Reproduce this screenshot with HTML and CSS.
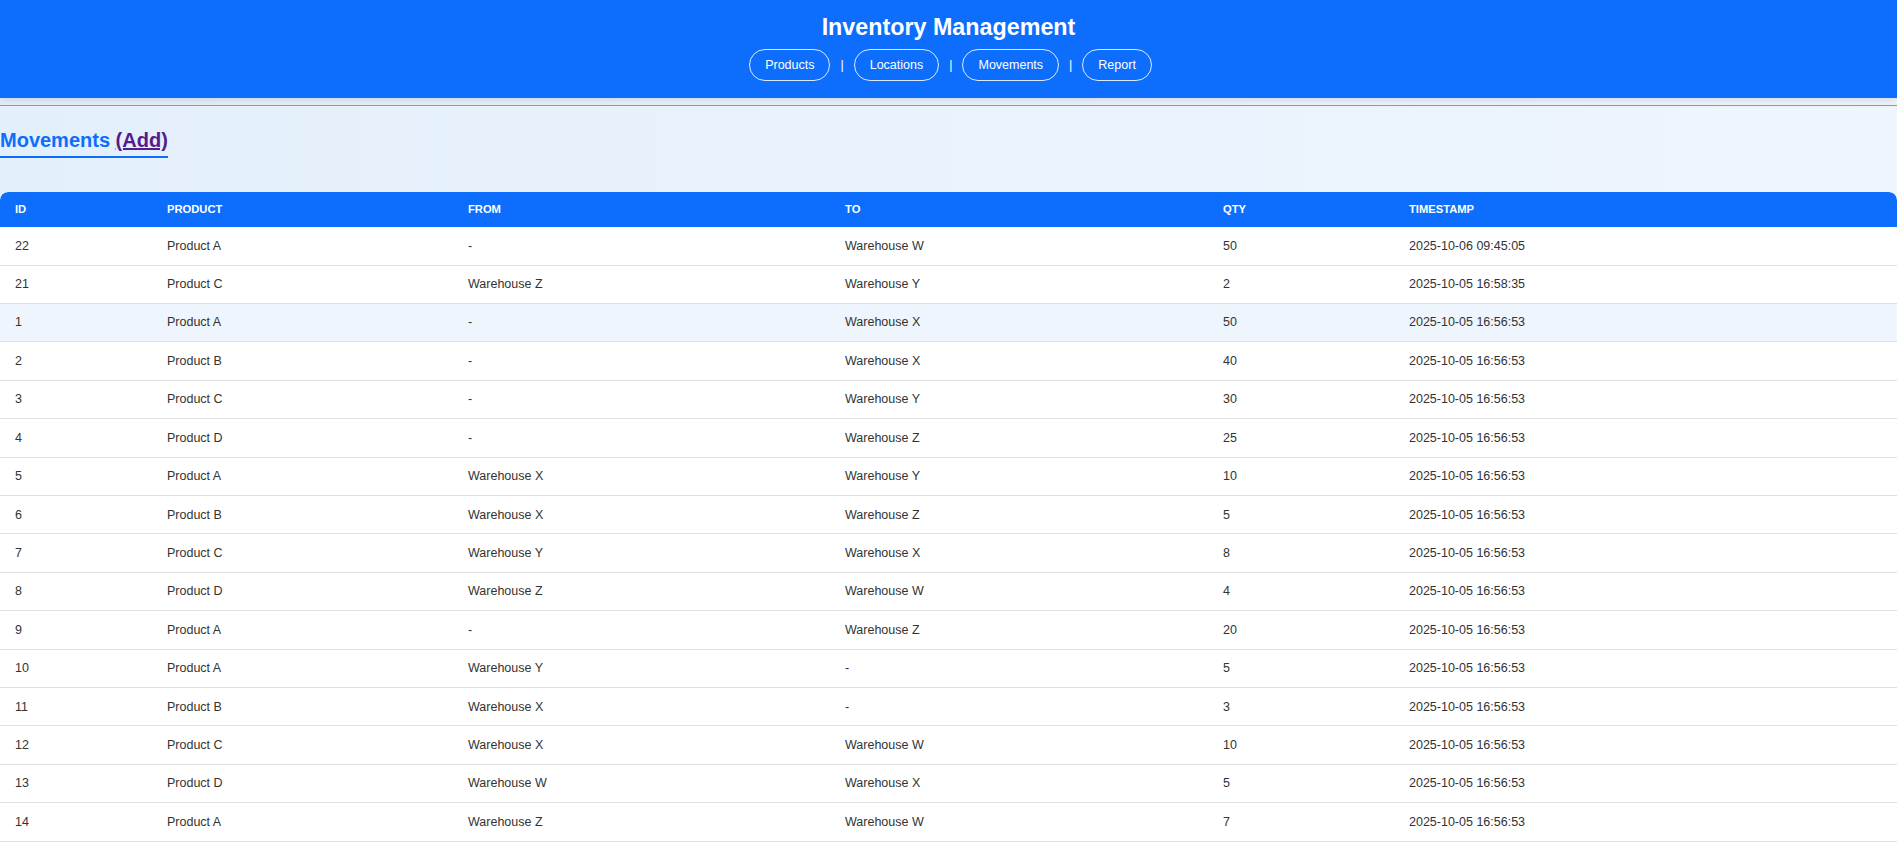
FILE: index.html
```html
<!DOCTYPE html>
<html lang="en">
<head>
<meta charset="utf-8">
<title>Inventory Management - Movements</title>
<link rel="stylesheet" href="styles.css">
</head>
<body>
<header class="site-header">
  <h1 class="site-title">Inventory Management</h1>
  <nav class="nav">
    <a class="nav-link" href="#">Products</a>
    <span class="nav-sep">|</span>
    <a class="nav-link" href="#">Locations</a>
    <span class="nav-sep">|</span>
    <a class="nav-link" href="#">Movements</a>
    <span class="nav-sep">|</span>
    <a class="nav-link" href="#">Report</a>
  </nav>
</header>
<hr class="divider">
<main class="content">
  <h2 class="page-title">Movements <a class="add-link" href="#">(Add)</a></h2>
  <table class="data-table">
    <colgroup>
      <col class="c-id"><col class="c-product"><col class="c-from"><col class="c-to"><col class="c-qty"><col class="c-ts">
    </colgroup>
    <thead>
      <tr><th>ID</th><th>Product</th><th>From</th><th>To</th><th>Qty</th><th>Timestamp</th></tr>
    </thead>
    <tbody>
      <tr><td>22</td><td>Product A</td><td>-</td><td>Warehouse W</td><td>50</td><td>2025-10-06 09:45:05</td></tr>
      <tr><td>21</td><td>Product C</td><td>Warehouse Z</td><td>Warehouse Y</td><td>2</td><td>2025-10-05 16:58:35</td></tr>
      <tr class="is-hover"><td>1</td><td>Product A</td><td>-</td><td>Warehouse X</td><td>50</td><td>2025-10-05 16:56:53</td></tr>
      <tr><td>2</td><td>Product B</td><td>-</td><td>Warehouse X</td><td>40</td><td>2025-10-05 16:56:53</td></tr>
      <tr><td>3</td><td>Product C</td><td>-</td><td>Warehouse Y</td><td>30</td><td>2025-10-05 16:56:53</td></tr>
      <tr><td>4</td><td>Product D</td><td>-</td><td>Warehouse Z</td><td>25</td><td>2025-10-05 16:56:53</td></tr>
      <tr><td>5</td><td>Product A</td><td>Warehouse X</td><td>Warehouse Y</td><td>10</td><td>2025-10-05 16:56:53</td></tr>
      <tr><td>6</td><td>Product B</td><td>Warehouse X</td><td>Warehouse Z</td><td>5</td><td>2025-10-05 16:56:53</td></tr>
      <tr><td>7</td><td>Product C</td><td>Warehouse Y</td><td>Warehouse X</td><td>8</td><td>2025-10-05 16:56:53</td></tr>
      <tr><td>8</td><td>Product D</td><td>Warehouse Z</td><td>Warehouse W</td><td>4</td><td>2025-10-05 16:56:53</td></tr>
      <tr><td>9</td><td>Product A</td><td>-</td><td>Warehouse Z</td><td>20</td><td>2025-10-05 16:56:53</td></tr>
      <tr><td>10</td><td>Product A</td><td>Warehouse Y</td><td>-</td><td>5</td><td>2025-10-05 16:56:53</td></tr>
      <tr><td>11</td><td>Product B</td><td>Warehouse X</td><td>-</td><td>3</td><td>2025-10-05 16:56:53</td></tr>
      <tr><td>12</td><td>Product C</td><td>Warehouse X</td><td>Warehouse W</td><td>10</td><td>2025-10-05 16:56:53</td></tr>
      <tr><td>13</td><td>Product D</td><td>Warehouse W</td><td>Warehouse X</td><td>5</td><td>2025-10-05 16:56:53</td></tr>
      <tr><td>14</td><td>Product A</td><td>Warehouse Z</td><td>Warehouse W</td><td>7</td><td>2025-10-05 16:56:53</td></tr>
      <tr><td>15</td><td>Product B</td><td>Warehouse W</td><td>Warehouse Y</td><td>6</td><td>2025-10-05 16:56:53</td></tr>
      <tr><td>16</td><td>Product C</td><td>Warehouse Y</td><td>Warehouse Z</td><td>4</td><td>2025-10-05 16:56:53</td></tr>
    </tbody>
  </table>
</main>
</body>
</html>
```

FILE: styles.css
```css
* { box-sizing: border-box; }

html, body {
  margin: 0;
  padding: 0;
}

body {
  font-family: "Liberation Sans", Arial, sans-serif;
  color: #333;
  background: linear-gradient(90deg, #e3effb 0%, #e9f3fd 50%, #eff5fd 100%);
  min-height: 100vh;
}

.site-header {
  position: relative;
  z-index: 1;
  background: #0d6efd;
  color: #fff;
  text-align: center;
  padding: 13.5px 0 16.4px;
  box-shadow: 0 2px 8px rgba(0, 0, 0, 0.12);
}

.site-title {
  margin: 0 0 9px;
  font-size: 23.3px;
  font-weight: bold;
  line-height: 26.8px;
}

.nav {
  display: flex;
  justify-content: center;
  align-items: center;
  gap: 10px;
  padding-left: 4px;
}

.nav-link {
  display: inline-block;
  color: #fff;
  text-decoration: none;
  font-size: 12.5px;
  line-height: 14px;
  padding: 8px 15px;
  border: 1px solid rgba(255, 255, 255, 0.85);
  border-radius: 20px;
}

.nav-sep {
  font-size: 12.5px;
  color: #fff;
}

.divider {
  margin: 7px 0 0;
  border: 0;
  border-top: 1px solid #9a9a9a;
  border-bottom: 1px solid #eef2f6;
  height: 0;
}

.content {
  padding: 0;
}

.page-title {
  display: inline-block;
  margin: 22px 0 34px;
  font-size: 20px;
  line-height: 23px;
  font-weight: bold;
  color: #0d6efd;
  padding-bottom: 4px;
  border-bottom: 2px solid #0d6efd;
}

.add-link {
  color: #551a8b;
  text-decoration: underline;
}

.data-table {
  width: 100%;
  table-layout: fixed;
  border-collapse: separate;
  border-spacing: 0;
  background: #fff;
  border-radius: 8px 8px 0 0;
  overflow: hidden;
}

.c-id { width: 152px; }
.c-product { width: 301px; }
.c-from { width: 377px; }
.c-to { width: 378px; }
.c-qty { width: 186px; }
.c-ts { width: 503px; }

.data-table th {
  background: #0d6efd;
  color: #fff;
  text-align: left;
  font-size: 11.2px;
  font-weight: bold;
  text-transform: uppercase;
  line-height: 12.7px;
  padding: 11.4px 15px;
}

.data-table th:first-child { border-top-left-radius: 8px; }
.data-table th:last-child { border-top-right-radius: 8px; }

.data-table td {
  font-size: 12.5px;
  line-height: 14.4px;
  padding: 11.5px 15px;
  color: #333;
  border-bottom: 1px solid #e0e0e0;
}

.data-table tbody tr.is-hover td {
  background: #eef5fd;
}
```
